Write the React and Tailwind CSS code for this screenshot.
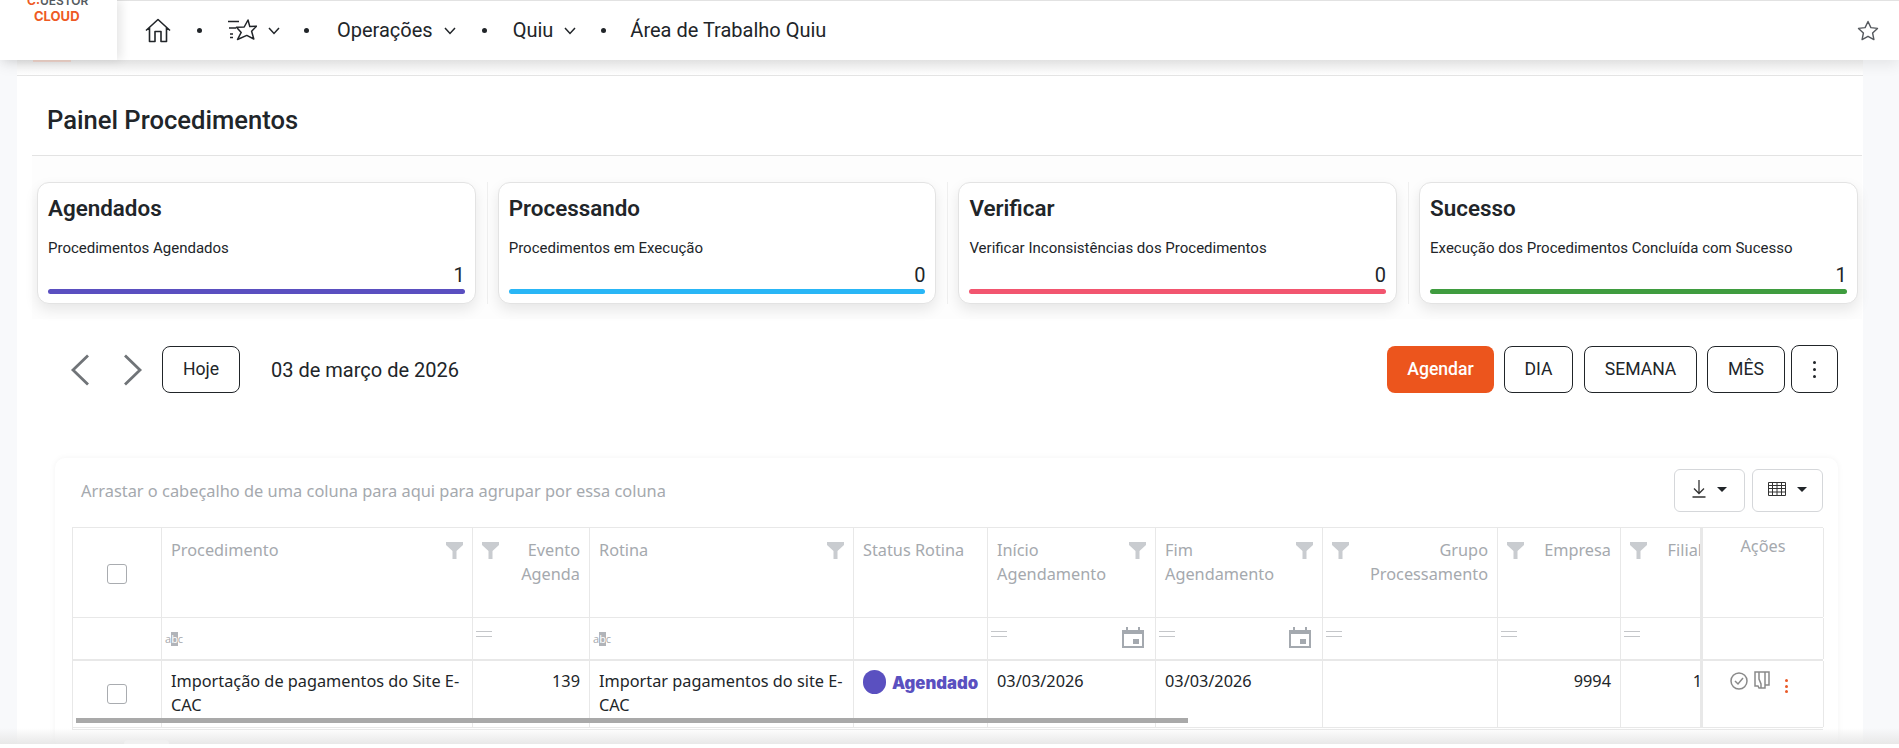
import React from "react";

const Funnel = () => (
  <svg width="17" height="17" viewBox="0 0 17 17" className="shrink-0"><path d="M0 0H17V3L10.5 9V17H6.5V9L0 3Z" fill="#c9ccd0" /></svg>
);
const Eq = () => (
  <svg width="16" height="6" viewBox="0 0 16 6" className="shrink-0"><path d="M0 .5H16M0 5.5H16" stroke="#c4c6c9" strokeWidth="1" /></svg>
);
const Abc = () => (
  <span className="text-[11px] leading-[14px] text-[#a5a9ae] font-['Open_Sans',sans-serif] flex">
    <span>a</span><span className="bg-[#b1b4b9] text-white">b</span><span>c</span>
  </span>
);
const Cal = () => (
  <svg width="22" height="21" viewBox="0 0 22 21" className="shrink-0">
    <path d="M0 3H4V0H6V3H16V0H18V3H22V21H0ZM2 7V19H20V7Z" fill="#a4a9af" />
    <rect x="11" y="12" width="6" height="5" fill="#a4a9af" />
  </svg>
);
const Check = () => (
  <span className="block w-[20px] h-[20px] rounded-[3px] border border-[#a9acb0] bg-white" />
);

const Chevron = () => (
  <svg width="12" height="8" viewBox="0 0 12 8" fill="none" stroke="#212529" strokeWidth="1.5" className="mt-[2px]"><path d="M1 1L6 6.5L11 1" /></svg>
);
const Dot = () => <span className="block w-[5px] h-[5px] rounded-full bg-[#212529]" />;

const cards = [
  { t: "Agendados", s: "Procedimentos Agendados", n: "1", c: "bg-[#5a4fc0]" },
  { t: "Processando", s: "Procedimentos em Execução", n: "0", c: "bg-[#29b6f6]" },
  { t: "Verificar", s: "Verificar Inconsistências dos Procedimentos", n: "0", c: "bg-[#f2556f]" },
  { t: "Sucesso", s: "Execução dos Procedimentos Concluída com Sucesso", n: "1", c: "bg-[#3f9c3f]" },
];

const cols = "grid grid-cols-[89px_311px_117px_264px_134px_168px_167px_175px_123px_82px_121px]";
const cell = "border-r border-[#e8e8e8] px-[9px] min-w-0";

const Btn = ({ children, className = "" }) => (
  <button className={`h-[47px] rounded-[8px] border border-[#212529] bg-white text-[17.6px] text-[#212529] flex items-center justify-center ${className}`}>{children}</button>
);

export default function App() {
  return (
    <div className="relative h-[748px] w-[1899px] overflow-hidden bg-[#f8f9fb] font-['Roboto',sans-serif] text-[#212529]">
      <header className="relative z-10 flex h-[60px] border-t border-[#e2e2e2] bg-white shadow-[0_4px_14px_rgba(0,0,0,0.09)]">
        <div className="relative z-10 h-[60px] w-[117px] -mt-px overflow-hidden bg-white shadow-[4px_0_10px_rgba(0,0,0,0.1)] font-['Inter',sans-serif]">
          <div className="-mt-[6px] ml-[27px] flex text-[12px] leading-[14px] font-semibold text-[#555a60]"><span className="text-[#ee5a24] font-bold">C:</span>UESTOR</div>
          <div className="ml-[34px] mt-[1px] text-[13px] leading-[15px] font-bold text-[#ee5a24]">CLOUD</div>
        </div>
        <nav className="flex flex-1 items-center pl-[28px] text-[20px] pb-[1px]">
          <svg width="26" height="25" viewBox="0 0 26 25" fill="none" stroke="#212529" strokeWidth="1.6" strokeLinejoin="round"><path d="M1 12.5L13 1.5L25 12.5M4.5 9.5V23.5H10V13.5H16V23.5H21.5V9.5" /></svg>
          <span className="ml-[26px]"><Dot /></span>
          <svg className="ml-[25px]" width="30" height="22" viewBox="0 0 30 22" fill="none" stroke="#212529" strokeWidth="1.5" strokeLinejoin="round"><path d="M1 2.5H12M2 9H9M3 15H6M3 18.5H6" /><path d="M21 1L22.8 7.6L29.5 7.2L24.6 12.2L26.8 20L19.8 16.4L10.5 20.5L14.2 13.4L9.5 8.2L17.2 8Z" /></svg>
          <span className="ml-[11px]"><Chevron /></span>
          <span className="ml-[24px]"><Dot /></span>
          <span className="ml-[28px]">Operações</span>
          <span className="ml-[11px]"><Chevron /></span>
          <span className="ml-[26px]"><Dot /></span>
          <span className="ml-[26px]">Quiu</span>
          <span className="ml-[11px]"><Chevron /></span>
          <span className="ml-[25px]"><Dot /></span>
          <span className="ml-[24px]">Área de Trabalho Quiu</span>
          <svg className="ml-auto mr-[20px]" width="22" height="21" viewBox="0 0 22 21" fill="none" stroke="#55595e" strokeWidth="1.4" strokeLinejoin="round"><path d="M11 1.5L13.9 7.6L20.5 8.4L15.6 13L16.9 19.6L11 16.3L5.1 19.6L6.4 13L1.5 8.4L8.1 7.6Z" /></svg>
        </nav>
      </header>

      <span className="absolute left-[33px] top-[60px] z-0 h-[2px] w-[38px] bg-[#f8dcd2]" />

      <main className="ml-[17px] h-[688px] w-[1846px] bg-white">
        <div className="h-[16px] border-b border-[#e5e5e5] bg-gradient-to-b from-[#f1f1f1] to-white" />
        <section className="ml-[15px] mt-[10px] w-[1830px] h-[70px] border-b border-[#e3e3e3] flex items-center pl-[15px]">
          <h1 className="text-[25.6px] font-medium leading-[32px] text-[#212529] pb-[2px]">Painel Procedimentos</h1>
        </section>

        <section className="ml-[15px] h-[163px] w-[1830px] pl-[5px] pt-[26px] flex bg-[#fdfdfd]">
          {cards.map((c, i) => (
            <React.Fragment key={c.t}>
              <article className="h-[122px] w-[438.7px] rounded-[12px] border border-[#e3e3e3] bg-white px-[10px] shadow-[0_6px_14px_rgba(0,0,0,0.09)] flex flex-col">
                <h2 className="mt-[11px] text-[22.4px] leading-[28px] font-semibold text-[#212529]">{c.t}</h2>
                <p className="mt-[16px] text-[15px] leading-[20px]">{c.s}</p>
                <div className="mt-[6px] text-right text-[20px] leading-[22px]">{c.n}</div>
                <div className={`mt-[3px] h-[5px] rounded-full ${c.c}`} />
              </article>
              {i < 3 && <span className="ml-[11px] mr-[10px] h-[122px] w-px bg-[#efefef]" />}
            </React.Fragment>
          ))}
        </section>

        <section className="flex items-center h-[47px] mt-[27px] pl-[53px] pr-[25px]">
          <svg width="20" height="32" viewBox="0 0 20 32" fill="none" stroke="#707478" strokeWidth="2.8"><path d="M18 1.5L3 16L18 30.5" /></svg>
          <svg className="ml-[33px]" width="20" height="32" viewBox="0 0 20 32" fill="none" stroke="#707478" strokeWidth="2.8"><path d="M2 1.5L17 16L2 30.5" /></svg>
          <Btn className="ml-[19px] w-[78px]">Hoje</Btn>
          <span className="ml-[31px] text-[20px]">03 de março de 2026</span>
          <div className="ml-auto flex">
            <button className="h-[47px] w-[107px] rounded-[8px] bg-[#ec551d] text-[17.6px] font-medium text-white">Agendar</button>
            <Btn className="ml-[10px] w-[69px]">DIA</Btn>
            <Btn className="ml-[11px] w-[113px]">SEMANA</Btn>
            <Btn className="ml-[10px] w-[78px]">MÊS</Btn>
            <button className="ml-[6px] -mt-px h-[48px] w-[47px] rounded-[8px] border border-[#212529] bg-white flex flex-col items-center justify-center gap-[4px]">
              <span className="h-[3px] w-[3px] rounded-full bg-[#212529]" /><span className="h-[3px] w-[3px] rounded-full bg-[#212529]" /><span className="h-[3px] w-[3px] rounded-full bg-[#212529]" />
            </button>
          </div>
        </section>

        <section className="relative ml-[38px] mt-[65px] w-[1783px] h-[290px] rounded-[10px] bg-white pl-[17px] pr-[15px] pt-[11px] shadow-[0_0_6px_rgba(0,0,0,0.05)] font-['Noto_Sans',sans-serif]">
          <div className="flex h-[43px] items-center">
            <span className="ml-[9px] pt-[2px] text-[16.4px] text-[#a5a9ae]">Arrastar o cabeçalho de uma coluna para aqui para agrupar por essa coluna</span>
            <button className="ml-auto flex h-[43px] w-[71px] items-center justify-center gap-[11px] rounded-[6px] border border-[#d5d7da] bg-white pb-[3px]">
              <svg width="14" height="18" viewBox="0 0 14 18" fill="none" stroke="#333" strokeWidth="1.3"><path d="M7 0V13M2 8.5L7 13.5L12 8.5M0.5 17H13.5" /></svg>
              <svg width="10" height="5" viewBox="0 0 10 5"><path d="M0 0H10L5 5Z" fill="#212529" /></svg>
            </button>
            <button className="ml-[7px] flex h-[43px] w-[71px] items-center justify-center gap-[11px] rounded-[6px] border border-[#d5d7da] bg-white pb-[3px]">
              <svg width="18" height="14" viewBox="0 0 18 14" fill="none" stroke="#333" strokeWidth="1"><path d="M.5 .5H17.5V13.5H.5ZM.5 3.5H17.5M.5 6.5H17.5M.5 10H17.5M4.5 .5V13.5M9 .5V13.5M13.5 .5V13.5" /></svg>
              <svg width="10" height="5" viewBox="0 0 10 5"><path d="M0 0H10L5 5Z" fill="#212529" /></svg>
            </button>
          </div>

          <div className="mt-[15px] w-[1751px] border-l border-t border-[#e8e8e8] text-[16.3px] leading-[23.5px]">
            <div className={`${cols} h-[90px] border-b border-[#e8e8e8] text-[#a5a9ae]`}>
              <div className={`${cell} flex items-center justify-center pt-[2px]`}><Check /></div>
              <div className={`${cell} pt-[11px] flex justify-between`}><span>Procedimento</span><span className="pt-[3px]"><Funnel /></span></div>
              <div className={`${cell} pt-[11px] flex justify-between`}><span className="pt-[3px]"><Funnel /></span><span className="text-right">Evento Agenda</span></div>
              <div className={`${cell} pt-[11px] flex justify-between`}><span>Rotina</span><span className="pt-[3px]"><Funnel /></span></div>
              <div className={`${cell} pt-[11px] whitespace-nowrap`}>Status Rotina</div>
              <div className={`${cell} pt-[11px] flex justify-between`}><span>Início<br />Agendamento</span><span className="pt-[3px]"><Funnel /></span></div>
              <div className={`${cell} pt-[11px] flex justify-between`}><span>Fim<br />Agendamento</span><span className="pt-[3px]"><Funnel /></span></div>
              <div className={`${cell} pt-[11px] flex justify-between`}><span className="pt-[3px]"><Funnel /></span><span className="text-right">Grupo<br />Processamento</span></div>
              <div className={`${cell} pt-[11px] flex justify-between`}><span className="pt-[3px]"><Funnel /></span><span>Empresa</span></div>
              <div className={`${cell} pt-[11px] pr-0 flex justify-between overflow-hidden border-r-[3px]`}><span className="pt-[3px]"><Funnel /></span><span className="-mr-[2px]">Filial</span></div>
              <div className={`${cell} pt-[7px] text-center`}>Ações</div>
            </div>
            <div className={`${cols} h-[43px] border-b-[2px] border-[#e8e8e8]`}>
              <div className={cell} />
              <div className={`${cell} pl-[3px] pt-[14px]`}><Abc /></div>
              <div className={`${cell} pl-[3px] pt-[13px]`}><Eq /></div>
              <div className={`${cell} pl-[3px] pt-[14px]`}><Abc /></div>
              <div className={cell} />
              <div className={`${cell} pl-[3px] flex justify-between items-start pr-[11px]`}><span className="pt-[13px]"><Eq /></span><span className="pt-[9px]"><Cal /></span></div>
              <div className={`${cell} pl-[3px] flex justify-between items-start pr-[11px]`}><span className="pt-[13px]"><Eq /></span><span className="pt-[9px]"><Cal /></span></div>
              <div className={`${cell} pl-[3px] pt-[13px]`}><Eq /></div>
              <div className={`${cell} pl-[3px] pt-[13px]`}><Eq /></div>
              <div className={`${cell} pl-[3px] pt-[13px] border-r-[3px]`}><Eq /></div>
              <div className={cell} />
            </div>
            <div className={`${cols} h-[67px] border-b border-[#e8e8e8] text-[#212529]`}>
              <div className={`${cell} flex items-center justify-center`}><Check /></div>
              <div className={`${cell} pt-[9px] pr-[6px]`}>Importação de pagamentos do Site E-CAC</div>
              <div className={`${cell} pt-[9px] text-right`}>139</div>
              <div className={`${cell} pt-[9px] pr-[6px]`}>Importar pagamentos do site E-CAC</div>
              <div className={`${cell} pt-[9px] pr-0 flex items-start gap-[6px] whitespace-nowrap`}>
                <span className="block h-[24px] w-[23px] rounded-full bg-[#5a50c0] shrink-0" />
                <span className="font-['Inter',sans-serif] text-[16.7px] leading-[26px] font-black text-[#5a50c0]">Agendado</span>
              </div>
              <div className={`${cell} pt-[9px]`}>03/03/2026</div>
              <div className={`${cell} pt-[9px]`}>03/03/2026</div>
              <div className={cell} />
              <div className={`${cell} pt-[9px] text-right`}>9994</div>
              <div className={`${cell} pt-[9px] pr-0 text-right border-r-[3px] overflow-hidden`}><span className="-mr-[2px] inline-block">1</span></div>
              <div className={`${cell} pl-[27px] pt-[11px] flex items-start`}>
                <svg width="18" height="18" viewBox="0 0 18 18" fill="none" stroke="#8a8a8a" strokeWidth="1.5"><circle cx="9" cy="9" r="8" /><path d="M5 9L8 12L13 6" /></svg>
                <svg className="ml-[6px] -mt-[1px]" width="16" height="18" viewBox="0 0 16 18" fill="none" stroke="#8a8a8a" strokeWidth="1.5"><path d="M1 1H15V14L11 14V17H5L4 15H1ZM5 1V8L7 13V17M11 1V14" /></svg>
                <span className="ml-[15px] mt-[7px] flex flex-col gap-[2.5px]">
                  <span className="block h-[3px] w-[3px] rounded-full bg-[#ea5a28]" /><span className="block h-[3px] w-[3px] rounded-full bg-[#ea5a28]" /><span className="block h-[3px] w-[3px] rounded-full bg-[#ea5a28]" />
                </span>
              </div>
            </div>
            <div className="mt-px h-px bg-[#e8e8e8]" />
          </div>
          <span className="absolute left-[21px] top-[260px] h-[5px] w-[1112px] bg-[#a9a9a9]" />
        </section>
      </main>

      <div className="absolute inset-x-0 bottom-0 z-20">
        <div className="relative h-[16px] bg-gradient-to-b from-[#ffffff00] to-[#e8e8e8]">
          <span className="absolute left-[124px] bottom-0 h-[4px] w-[45px] rounded-t-[5px] bg-[#f0f0f0]" />
        </div>
        <div className="h-[4px] bg-white" />
      </div>
    </div>
  );
}
